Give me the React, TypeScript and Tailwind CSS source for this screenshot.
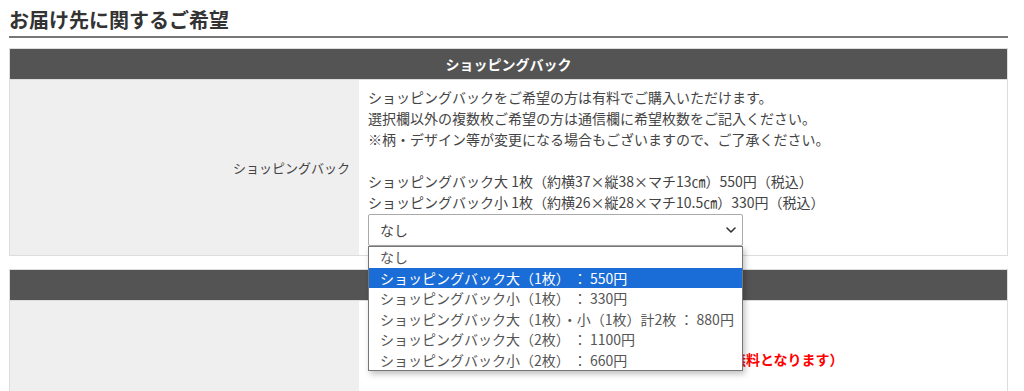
import React from 'react';

const jp = { fontFamily: '"Noto Sans CJK JP", "Noto Sans", sans-serif' };

const OPTIONS = [
    'なし',
    'ショッピングバック大（1枚） ： 550円',
    'ショッピングバック小（1枚） ： 330円',
    'ショッピングバック大（1枚）・小（1枚）計2枚 ： 880円',
    'ショッピングバック大（2枚） ： 1100円',
    'ショッピングバック小（2枚） ： 660円',
];

function Chevron() {
    return (
        <svg width="10" height="6" viewBox="0 0 10 6" fill="none">
            <path d="M1 1l4 4 4-4" stroke="#333" strokeWidth="1.6" strokeLinecap="round" strokeLinejoin="round" />
        </svg>
    );
}

export default function App() {
    return (
        <div className="w-[1024px] h-[391px] overflow-hidden bg-white text-[#444]" style={jp}>
            <div className="ml-[9px] w-[999px]">
                {/* Heading */}
                <h2 className="pt-[6px] pb-[2px] text-[20px] leading-[28px] font-bold text-[#333] border-b-2 border-[#777]">
                    お届け先に関するご希望
                </h2>

                {/* Shopping bag table */}
                <div className="mt-[10px] border border-[#ddd]">
                    <div className="h-[30px] bg-[#545454] text-white font-bold text-[14px] flex items-center justify-center">
                        ショッピングバック
                    </div>
                    <div className="flex border-t border-[#ddd]">
                        <div className="w-[349px] bg-[#efefef] flex items-center justify-end pr-[9px] text-[13px]">
                            ショッピングバック
                        </div>
                        <div className="flex-1 pl-[9px] pt-[7px] pb-[9px] text-[14px] leading-[21px]">
                            <p>ショッピングバックをご希望の方は有料でご購入いただけます。</p>
                            <p>選択欄以外の複数枚ご希望の方は通信欄に希望枚数をご記入ください。</p>
                            <p>※柄・デザイン等が変更になる場合もございますので、ご了承ください。</p>
                            <p>&nbsp;</p>
                            <p>ショッピングバック大 1枚（約横37×縦38×マチ13㎝）550円（税込）</p>
                            <p>ショッピングバック小 1枚（約横26×縦28×マチ10.5㎝）330円（税込）</p>
                            <div className="relative mt-[1px] w-[375px]">
                                <div className="h-[32px] border border-[#aaa] rounded-[2px] bg-white flex items-center justify-between pl-[11px] pr-[6px]">
                                    <span>なし</span>
                                    <Chevron />
                                </div>
                                {/* open dropdown list */}
                                <ul className="absolute left-0 top-[32px] w-[375px] bg-white border border-[#767676] shadow-[2px_3px_6px_rgba(0,0,0,0.25)] z-10 text-[14px] leading-[20.5px] text-[#555]">
                                    {OPTIONS.map((o, i) => (
                                        <li
                                            key={o}
                                            className={`pl-[11px] whitespace-pre ${i === 1 ? 'bg-[#1a6cd6] text-white' : ''}`}
                                        >
                                            {o}
                                        </li>
                                    ))}
                                </ul>
                            </div>
                        </div>
                    </div>
                </div>

                {/* Second table (mostly covered by the open list) */}
                <div className="mt-[13px] border border-[#ddd]">
                    <div className="h-[30px] bg-[#545454]" />
                    <div className="flex border-t border-[#ddd] h-[200px]">
                        <div className="w-[349px] bg-[#efefef]" />
                        <div className="flex-1 pl-[9px] pt-[48px] text-[14px] leading-[21px]">
                            <p className="text-[#ff0000] font-bold">ギフト包装をご希望の方は別途お申し込みください（送料無料となります）</p>
                        </div>
                    </div>
                </div>
            </div>
        </div>
    );
}
